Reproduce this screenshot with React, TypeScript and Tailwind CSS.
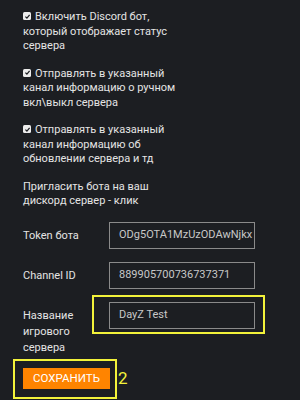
import React from "react";

const paragraphs = [
  { check: true, text: "Включить Discord бот, который отображает статус сервера" },
  { check: true, text: "Отправлять в указанный канал информацию о ручном вкл\\выкл сервера" },
  { check: true, text: "Отправлять в указанный канал информацию об обновлении сервера и тд" },
  { check: false, text: "Пригласить бота на ваш дискорд сервер - клик" },
];

function Check() {
  return (
    <span className="relative top-[-1px] mr-[4px] inline-flex h-[8px] w-[8px] items-center justify-center rounded-[1.5px] bg-[#ececec] align-middle">
      <svg viewBox="0 0 10 10" className="h-[7px] w-[7px]">
        <path d="M2 5.2 L4.2 7.3 L8 2.8" fill="none" stroke="#1c1e22" strokeWidth="1.8" />
      </svg>
    </span>
  );
}

function Field({ label, value, highlight }: { label: string; value: string; highlight?: boolean }) {
  return (
    <div className={`flex ${highlight ? "items-start" : "items-center"}`}>
      <div className={`w-[86px] shrink-0 leading-[16px] ${highlight ? "mt-[6px] pr-[16px]" : ""}`}>{label}</div>
      <div className="relative">
        <div className="flex h-[27px] w-[146px] items-center overflow-hidden whitespace-nowrap border border-[#8a8a8a] pl-[9px] text-[#c8c8c8]">
          {value}
        </div>
        {highlight && (
          <div className="absolute -left-[17px] -right-[10px] -top-[7px] -bottom-[5px] border-2 border-[#f2f23a]" />
        )}
      </div>
    </div>
  );
}

export default function App() {
  return (
    <div
      className="relative h-[400px] w-[300px] overflow-hidden bg-[#1c1e22] pl-[23px] pt-[10px] text-[11px] leading-[14.5px] text-[#e4e4e4]"
      style={{ fontFamily: "Roboto, 'Liberation Sans', sans-serif" }}
    >
      <div className="w-[157px]">
        {paragraphs.map((p, i) => (
          <p key={i} className="mb-[13px]">
            {p.check && <Check />}
            {p.text}
          </p>
        ))}
      </div>

      <div className="flex flex-col gap-[13px] pt-[0.5px]">
        <Field label="Token бота" value="ODg5OTA1MzUzODAwNjkx" />
        <Field label="Channel ID" value="889905700736737371" />
        <Field label="Название игрового сервера" value="DayZ Test" highlight />
      </div>

      <div className="relative mt-[12px] inline-block">
        <button className="flex h-[21px] w-[87px] items-center justify-center bg-[#ff8400] text-[11.5px] text-white">
          СОХРАНИТЬ
        </button>
        <div className="absolute -left-[10px] -right-[7px] -top-[9px] -bottom-[10px] border-2 border-[#f2f23a]" />
        <div className="absolute left-[95px] top-[0px] text-[17px] leading-[20px] text-[#f2f23a]">2</div>
      </div>
    </div>
  );
}
